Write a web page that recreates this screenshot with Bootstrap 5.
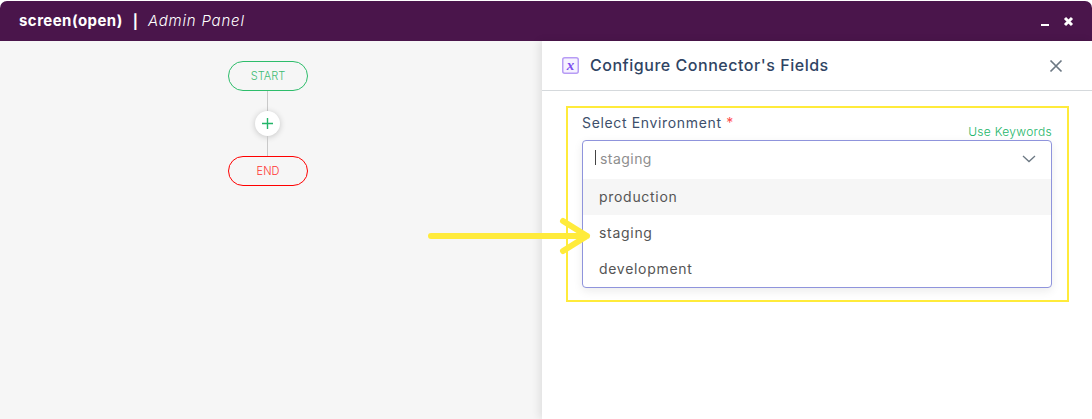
<!DOCTYPE html>
<html lang="en">
<head>
<meta charset="utf-8">
<title>Admin Panel</title>
<link href="https://cdn.jsdelivr.net/npm/bootstrap@5.3.0/dist/css/bootstrap.min.css" rel="stylesheet">
<style>
html,body{height:100%;}
body{margin:0;background:#fff;font-family:Inter,"Noto Sans",sans-serif;overflow:hidden;padding-top:1px;}
.app-window{height:418px;position:relative;overflow:hidden;}
.title-bar{height:40px;background:#4a154b;color:#fff;border-radius:7px 7px 0 0;padding:0 18px 0 19px;}
.title-name{font-size:15px;font-weight:700;letter-spacing:.45px;}
.title-sep{font-size:14px;font-weight:700;margin:0 10px;}
.title-sub{font-size:15px;font-style:italic;font-weight:300;letter-spacing:.8px;}
.win-controls{gap:14px;}
.canvas-pane{width:542px;background:#f6f6f6;padding-top:20px;padding-left:228px;}
.flow-col{width:80px;}
.flow-pill{width:80px;height:30px;border-radius:15px;font-size:11px;font-weight:300;background:#f6f6f6;}
.pill-start{border:1px solid #2ebd6b;color:#3dbb73;}
.pill-end{border:1px solid #f00;color:#f33;}
.flow-line{width:1px;height:20px;background:#c9c9c9;margin-right:1px;}
.flow-add{width:25px;height:25px;background:#fff;border-radius:50%;box-shadow:0 1px 6px rgba(0,0,0,.2);margin-right:1px;}
.config-pane{background:#fff;box-shadow:-3px 0 8px rgba(0,0,0,.09);position:relative;}
.config-head{height:50px;padding:0 29px 0 20px;border-bottom:1px solid #d5d9dc;}
.config-title{font-size:16px;font-weight:500;color:#2f4463;margin:0 0 0 11px;letter-spacing:.53px;}
.highlight-box{margin:15px 23px 0 24px;height:196px;border:2px solid #ffeb3b;padding:6px 15px 0 14px;}
.field-label{font-size:14px;color:#3d4f6b;line-height:18px;letter-spacing:.65px;}
.req{color:#ff4d4d;}
.kw-link{font-size:12px;font-weight:300;color:#22b568;line-height:14px;margin:11px 0 1px;letter-spacing:.3px;}
.picker{border:1px solid #8f94dc;border-radius:4px;box-shadow:0 3px 10px rgba(0,0,0,.08);background:#fff;}
.picker-input{height:38px;padding:0 15px 3px 12px;font-size:14px;color:#8e8e8e;letter-spacing:.45px;}
.caret-bar{width:1px;height:15px;background:#444;margin-right:4px;margin-top:-2px;}
.picker-opt{height:36px;padding:0 16px 2px;font-size:14px;color:#555;letter-spacing:.7px;}
.picker-opt.is-hover{background:#f6f6f6;}
.arrow-overlay{position:absolute;left:425px;top:214px;pointer-events:none;}
</style>
</head>
<body>
<div class="app-window d-flex flex-column">
  <header class="title-bar d-flex align-items-center justify-content-between flex-shrink-0">
    <div class="d-flex align-items-center">
      <span class="title-name">screen(open)</span><span class="title-sep">|</span><span class="title-sub">Admin Panel</span>
    </div>
    <div class="win-controls d-flex align-items-center">
      <svg width="8" height="9" viewBox="0 0 8 9"><rect x="0" y="7" width="8" height="2" fill="#fff"/></svg>
      <svg width="11" height="11" viewBox="0 0 11 11"><path d="M2 2l7 7M9 2l-7 7" stroke="#fff" stroke-width="3"/></svg>
    </div>
  </header>
  <div class="d-flex flex-grow-1">
    <section class="canvas-pane flex-shrink-0">
      <div class="flow-col d-flex flex-column align-items-center">
        <div class="flow-pill pill-start d-flex align-items-center justify-content-center">START</div>
        <div class="flow-line"></div>
        <div class="flow-add d-flex align-items-center justify-content-center">
          <svg width="13" height="13" viewBox="0 0 13 13"><path d="M6.500 1v11M1 6.500h11" fill="none" stroke="#22b568" stroke-width="1.400"/></svg>
        </div>
        <div class="flow-line"></div>
        <div class="flow-pill pill-end d-flex align-items-center justify-content-center">END</div>
      </div>
    </section>
    <section class="config-pane flex-grow-1">
      <div class="config-head d-flex align-items-center">
        <svg width="17" height="17" viewBox="0 0 17 17"><rect x=".75" y=".75" width="15.500" height="15.500" rx="2" fill="#f6f2ff" stroke="#b79cf5" stroke-width="1.5"/><text x="8.500" y="13" font-family="Liberation Serif, serif" font-size="15" font-weight="700" font-style="italic" fill="#7c4df0" text-anchor="middle">x</text></svg>
        <h1 class="config-title">Configure Connector's Fields</h1>
        <svg class="ms-auto" width="14" height="14" viewBox="0 0 14 14"><path d="M1.500 1.500l11 11M12.500 1.500l-11 11" stroke="#6c7883" stroke-width="1.7"/></svg>
      </div>
      <div class="highlight-box">
        <div class="d-flex justify-content-between">
          <label class="field-label">Select Environment <span class="req">*</span></label>
          <a class="kw-link text-decoration-none">Use Keywords</a>
        </div>
        <div class="picker">
          <div class="picker-input d-flex align-items-center">
            <span class="caret-bar"></span><span>staging</span>
            <svg class="ms-auto" width="14" height="8" viewBox="0 0 14 8"><path d="M1 1l6 5.500L13 1" fill="none" stroke="#6c7883" stroke-width="1.300"/></svg>
          </div>
          <div class="picker-opt is-hover d-flex align-items-center">production</div>
          <div class="picker-opt d-flex align-items-center">staging</div>
          <div class="picker-opt d-flex align-items-center">development</div>
        </div>
      </div>
    </section>
  </div>
  <svg class="arrow-overlay" width="170" height="44" viewBox="0 0 170 44"><path d="M6 21h156M138 6l24 15-24 15" fill="none" stroke="#ffeb3b" stroke-width="6" stroke-linecap="round" stroke-linejoin="round"/></svg>
</div>
<script src="https://cdn.jsdelivr.net/npm/bootstrap@5.3.0/dist/js/bootstrap.bundle.min.js"></script>
</body>
</html>
